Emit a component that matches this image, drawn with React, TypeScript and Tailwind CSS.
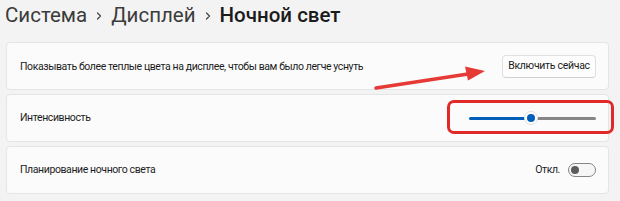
import React from "react";

function Chevron() {
  return (
    <svg width="8" height="10" viewBox="0 0 8 10" className="mx-[8px] mt-[1px]">
      <path d="M2.5 2 L5.5 5 L2.5 8" fill="none" stroke="#444" strokeWidth="1.2" strokeLinecap="round" strokeLinejoin="round" />
    </svg>
  );
}

export default function App() {
  return (
    <div
      className="relative w-[620px] h-[201px] overflow-hidden bg-[#f3f3f3]"
      style={{ fontFamily: 'Roboto, "Noto Sans", Arial, sans-serif' }}
    >
      <div className="flex items-center h-[30px] pl-[5px] text-[20.5px] leading-[28px]">
        <span className="text-[#3b3b3b]">Система</span>
        <Chevron />
        <span className="text-[#3b3b3b]">Дисплей</span>
        <Chevron />
        <span className="text-[#1b1b1b] font-medium">Ночной свет</span>
      </div>

      <div className="flex flex-col gap-[4px] mt-[12px] ml-[6px] w-[603px] text-[10.5px] tracking-[-0.4px] text-[#1b1b1b]">
        <div className="flex items-center justify-between h-[48px] pl-[13px] pr-[12px] bg-[#fbfbfb] border border-[#e5e5e5] rounded-[4px]">
          <span className="mt-[2px]">Показывать более теплые цвета на дисплее, чтобы вам было легче уснуть</span>
          <button className="h-[23px] w-[94px] whitespace-nowrap bg-[#fdfdfd] border border-[#e0e0e0] border-b-[#d0d0d0] rounded-[4px] text-[10.5px] tracking-[-0.3px] text-[#1b1b1b]">
            Включить сейчас
          </button>
        </div>

        <div className="flex items-center justify-between h-[48px] pl-[13px] pr-[12px] bg-[#fbfbfb] border border-[#e5e5e5] rounded-[4px]">
          <span>Интенсивность</span>
          <div className="relative w-[127px] h-[14px] flex items-center">
            <div className="h-[3px] w-[62px] bg-[#005fb8] rounded-l-full" />
            <div className="h-[3px] flex-1 bg-[#868686] rounded-r-full" />
            <div className="absolute left-[55px] top-0 w-[14px] h-[14px] rounded-full bg-white border border-[#e0e0e0] flex items-center justify-center">
              <div className="w-[8px] h-[8px] rounded-full bg-[#005fb8]" />
            </div>
          </div>
        </div>

        <div className="flex items-center justify-between h-[48px] pl-[13px] pr-[12px] bg-[#fbfbfb] border border-[#e5e5e5] rounded-[4px]">
          <span>Планирование ночного света</span>
          <div className="flex items-center gap-[8px]">
            <span className="text-[#1b1b1b]">Откл.</span>
            <div className="w-[28px] h-[14px] rounded-full border border-[#858585] bg-[#f6f6f6] flex items-center pl-[2px]">
              <div className="w-[8px] h-[8px] rounded-full bg-[#5c5c5c]" />
            </div>
          </div>
        </div>
      </div>

      <div className="absolute left-[447px] top-[100px] w-[167px] h-[34px] border-[3px] border-[#e02a2a] rounded-[7px]" />

      <svg className="absolute left-0 top-0" width="620" height="201" viewBox="0 0 620 201">
        <line x1="376" y1="88" x2="468" y2="74" stroke="#e53a35" strokeWidth="3.5" strokeLinecap="round" />
        <polygon points="485,71 465,66.5 468,80.5" fill="#e53a35" />
      </svg>
    </div>
  );
}
